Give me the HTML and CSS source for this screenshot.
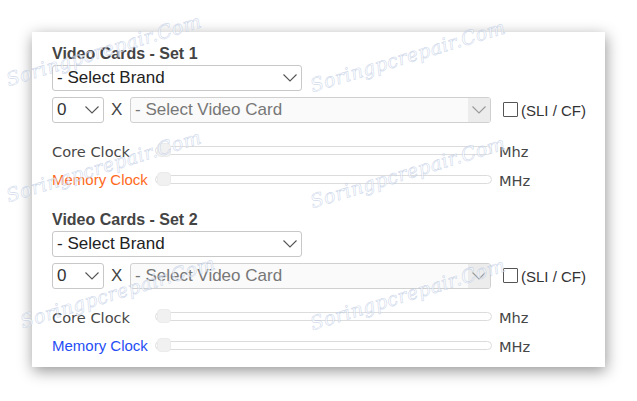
FILE: index.html
```html
<!DOCTYPE html>
<html>
<head>
<meta charset="utf-8">
<link rel="stylesheet" href="styles.css">
</head>
<body>
<div class="card">
  <div class="set">
    <div class="title">Video Cards - Set 1</div>
    <div class="select brand"><span>- Select Brand</span><svg class="chev" width="14" height="8" viewBox="0 0 14 8"><path d="M0.5 0.5 L7 7 L13.5 0.5" fill="none" stroke="#555" stroke-width="1.1"/></svg></div>
    <div class="row2">
      <div class="select num"><span>0</span><svg class="chev" width="14" height="8" viewBox="0 0 14 8"><path d="M0.5 0.5 L7 7 L13.5 0.5" fill="none" stroke="#555" stroke-width="1.1"/></svg></div>
      <span class="x">X</span>
      <div class="select card-sel"><span>- Select Video Card</span><div class="arrow"><svg width="14" height="8" viewBox="0 0 14 8"><path d="M0.5 0.5 L7 7 L13.5 0.5" fill="none" stroke="#999" stroke-width="1.1"/></svg></div></div>
      <input type="checkbox" class="check">
      <span class="sli">(SLI / CF)</span>
    </div>
    <div class="clock core-row">
      <span class="label core">Core Clock</span>
      <div class="slider"><div class="track"></div><div class="thumb"></div></div>
      <span class="unit">Mhz</span>
    </div>
    <div class="clock">
      <span class="label mem orange">Memory Clock</span>
      <div class="slider"><div class="track"></div><div class="thumb"></div></div>
      <span class="unit">MHz</span>
    </div>
  </div>
  <div class="set second">
    <div class="title">Video Cards - Set 2</div>
    <div class="select brand"><span>- Select Brand</span><svg class="chev" width="14" height="8" viewBox="0 0 14 8"><path d="M0.5 0.5 L7 7 L13.5 0.5" fill="none" stroke="#555" stroke-width="1.1"/></svg></div>
    <div class="row2">
      <div class="select num"><span>0</span><svg class="chev" width="14" height="8" viewBox="0 0 14 8"><path d="M0.5 0.5 L7 7 L13.5 0.5" fill="none" stroke="#555" stroke-width="1.1"/></svg></div>
      <span class="x">X</span>
      <div class="select card-sel"><span>- Select Video Card</span><div class="arrow"><svg width="14" height="8" viewBox="0 0 14 8"><path d="M0.5 0.5 L7 7 L13.5 0.5" fill="none" stroke="#999" stroke-width="1.1"/></svg></div></div>
      <input type="checkbox" class="check">
      <span class="sli">(SLI / CF)</span>
    </div>
    <div class="clock core-row">
      <span class="label core">Core Clock</span>
      <div class="slider"><div class="track"></div><div class="thumb"></div></div>
      <span class="unit">Mhz</span>
    </div>
    <div class="clock">
      <span class="label mem blue">Memory Clock</span>
      <div class="slider"><div class="track"></div><div class="thumb"></div></div>
      <span class="unit">MHz</span>
    </div>
  </div>
</div>
<div class="wm wm1">Soringpcrepair.Com</div>
<div class="wm wm2">Soringpcrepair.Com</div>
<div class="wm wm3">Soringpcrepair.Com</div>
<div class="wm wm4">Soringpcrepair.Com</div>
<div class="wm wm5">Soringpcrepair.Com</div>
<div class="wm wm6">Soringpcrepair.Com</div>
</body>
</html>
```

FILE: styles.css
```css
html, body {
  margin: 0;
  padding: 0;
  background: #ffffff;
}
body {
  position: relative;
  width: 637px;
  height: 401px;
  overflow: hidden;
  font-family: "Liberation Sans", Arial, sans-serif;
}
.card {
  margin: 32px 0 0 32px;
  width: 573px;
  height: 335px;
  box-sizing: border-box;
  padding: 13px 0 0 20px;
  background: #fff;
  box-shadow: 1px 4px 14px rgba(0, 0, 0, 0.42);
  display: flex;
  flex-direction: column;
}
.set {
  display: flex;
  flex-direction: column;
}
.set.second {
  margin-top: 18px;
}
.title {
  font-weight: bold;
  font-size: 16px;
  line-height: 17px;
  height: 17px;
  color: #444;
}
.select {
  box-sizing: border-box;
  height: 26px;
  border: 1px solid #c8c8c8;
  border-radius: 3px;
  background: #fff;
  display: flex;
  align-items: center;
  justify-content: space-between;
  font-size: 17px;
  color: #222;
  padding: 0 4px 0 4px;
}
.select span {
  line-height: 24px;
}
.brand {
  margin-top: 3px;
  width: 250px;
}
.row2 {
  margin-top: 6px;
  height: 26px;
  display: flex;
  align-items: center;
}
.num {
  width: 52px;
  color: #333;
}
.x {
  margin-left: 7px;
  width: 13px;
  font-size: 17px;
  color: #444;
}
.card-sel {
  margin-left: 6px;
  width: 361px;
  background: #fafafa;
  color: #777;
  padding-right: 0;
  border-color: #d0d0d0;
}
.card-sel .arrow {
  width: 22px;
  height: 24px;
  background: #ececec;
  border-radius: 0 2px 2px 0;
  display: flex;
  align-items: center;
  justify-content: center;
}
.check {
  appearance: none;
  -webkit-appearance: none;
  margin: 0 0 2px 12px;
  width: 15px;
  height: 15px;
  box-sizing: border-box;
  border: 1px solid #555;
  border-radius: 1px;
  background: #fff;
}
.sli {
  margin-left: 3px;
  font-size: 15px;
  color: #333;
}
.clock {
  height: 28px;
  display: flex;
  align-items: center;
}
.core-row {
  margin-top: 13px;
  margin-bottom: 1px;
}
.label {
  width: 103px;
  font-size: 15px;
  padding-top: 2px;
}
.core {
  font-family: "DejaVu Sans", Verdana, sans-serif;
  font-size: 14.6px;
  color: #474747;
}
.mem {
  font-family: "Liberation Sans", Arial, sans-serif;
  padding-top: 0;
}
.orange {
  color: #ff6a1c;
}
.blue {
  color: #1f4ef5;
}
.slider {
  position: relative;
  width: 337px;
  height: 14px;
}
.track {
  position: absolute;
  left: 0;
  right: 0;
  top: 3px;
  height: 9px;
  box-sizing: border-box;
  border: 1px solid #dcdcdc;
  border-radius: 5px;
  background: #fff;
}
.thumb {
  position: absolute;
  left: 2px;
  top: 0;
  width: 14px;
  height: 14px;
  border-radius: 4px;
  background: #f1f1f1;
  border: 1px solid #ebebeb;
  box-sizing: border-box;
}
.unit {
  margin-left: 7px;
  font-family: "DejaVu Sans", Verdana, sans-serif;
  font-size: 14.6px;
  color: #474747;
  padding-top: 2px;
}
.wm {
  position: absolute;
  font-family: "DejaVu Serif", serif;
  font-style: italic;
  font-size: 19px;
  letter-spacing: 0.5px;
  color: rgba(255, 255, 255, 0.6);
  -webkit-text-stroke: 0.6px rgba(160, 180, 215, 0.5);
  transform-origin: 0 100%;
  transform: rotate(-17deg);
  white-space: nowrap;
  pointer-events: none;
}
.wm1 { left: 10px; top: 68px; }
.wm2 { left: 10px; top: 184px; }
.wm3 { left: 24px; top: 310px; }
.wm4 { left: 314px; top: 74px; }
.wm5 { left: 314px; top: 190px; }
.wm6 { left: 314px; top: 312px; }
```
